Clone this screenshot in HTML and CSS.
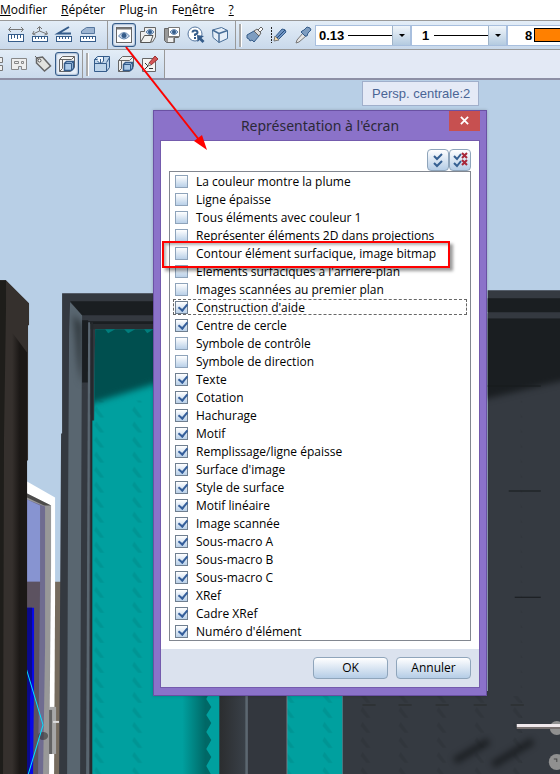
FILE: index.html
```html
<!DOCTYPE html>
<html lang="fr">
<head>
    <meta charset="UTF-8">
    <meta name="viewport" content="width=device-width, initial-scale=1.0">
    <title>Représentation à l'écran</title>
    <link rel="stylesheet" href="styles.css">
</head>
<body>
    <nav class="menubar">
        <a href="#"><u>M</u>odifier</a>
        <a href="#"><u>R</u>épéter</a>
        <a href="#">Plug-in</a>
        <a href="#">Fe<u>n</u>être</a>
        <a href="#"><u>?</u></a>
    </nav>

    <!-- First toolbar -->
    <div class="toolbar">
        <div class="tools tools-measure">
            <button class="tool" aria-label="Mesurer longueur"><svg viewBox="0 0 20 20"><path d="M3 4.500h14M5 2L2.500 4.500 5 7M15 2l2.500 2.500L15 7" stroke="#777" fill="none"/><rect x="2.500" y="9.500" width="15" height="7" fill="#fff" stroke="#355c8a"/><path d="M5.500 10v4M8.500 10v3M11.500 10v4M14.500 10v3" stroke="#355c8a"/></svg></button>
            <button class="tool" aria-label="Mesurer angle"><svg viewBox="0 0 20 20"><path d="M3 9l6.500-3 7.500 3M4 6L2.500 9l3 1M16 6l1.500 3-3 1M7 4l2.500-2.500L12 4M9.500 2v4" stroke="#777" fill="none"/><rect x="2.500" y="11.500" width="15" height="5" fill="#fff" stroke="#355c8a"/><path d="M5.500 12v2M8.500 12v2M11.500 12v2M14.500 12v2" stroke="#355c8a"/></svg></button>
            <button class="tool" aria-label="Mesurer pente"><svg viewBox="0 0 20 20"><path d="M15 2L4 8.500h13" stroke="#355c8a" stroke-width="2" fill="none"/><rect x="2.500" y="11.500" width="15" height="5" fill="#fff" stroke="#355c8a"/><path d="M5.500 12v2M8.500 12v2M11.500 12v2M14.500 12v2" stroke="#355c8a"/></svg></button>
            <button class="tool" aria-label="Mesurer surface"><svg viewBox="0 0 20 20"><path d="M3.500 8.500V6l5-3.500h8v6z" fill="#9db5d2" stroke="#56779f"/><rect x="2.500" y="11.500" width="15" height="5" fill="#fff" stroke="#355c8a"/><path d="M5.500 12v2M8.500 12v2M11.500 12v2M14.500 12v2" stroke="#355c8a"/></svg></button>
        </div>
        <div class="tools tools-view">
            <button class="tool active" aria-label="Représentation à l'écran" aria-pressed="true"><svg viewBox="0 0 20 20"><rect x="2.500" y="2.500" width="15" height="15" fill="#fff" stroke="#666"/><path d="M3 3.500h14" stroke="#777" stroke-width="2"/><path d="M4.500 11q5.500-7 11 0q-5.500 6-11 0z" fill="#c9d9ec" stroke="#6486af"/><circle cx="10" cy="10.500" r="2.500" fill="#355c8a"/></svg></button>
            <button class="tool" aria-label="Ouvrir vue"><svg viewBox="0 0 20 20"><path d="M2.500 17V6.500h4V2.500h11V12l-3 5z" fill="#eee" stroke="#666"/><path d="M2.500 17.500l4-7h8.500l-2.500 7z" fill="#f2f2f0" stroke="#555"/><path d="M8 7q4-5 8 0q-4 5-8 0z" fill="#b9cfe8" stroke="#6486af"/><circle cx="12" cy="7" r="2" fill="#355c8a"/></svg></button>
            <button class="tool" aria-label="Enregistrer vue"><svg viewBox="0 0 20 20"><path d="M2.500 3.500h14v9h-4v5h-8l-2-2z" fill="#999" stroke="#666"/><path d="M6.500 2.500h11v9h-11z" fill="#fff" stroke="#777"/><rect x="6" y="13" width="5" height="4" fill="#eee"/><path d="M8 7q4-5 8 0q-4 5-8 0z" fill="#b9cfe8" stroke="#6486af"/><circle cx="12" cy="7" r="2" fill="#355c8a"/></svg></button>
            <button class="tool" aria-label="Info"><svg viewBox="0 0 20 20"><circle cx="9" cy="9" r="7" fill="#fff" stroke="#56779f"/><path d="M6.500 7.500q0-2 2.500-2t2.500 2q0 1.500-2.500 2v1.500M9 12v2" stroke="#355c8a" stroke-width="2" fill="none"/><path d="M11 10l7 1-2.500 2 3 3-2 2-3-3-2 2z" fill="#355c8a"/></svg></button>
            <button class="tool" aria-label="Vue 3D"><svg viewBox="0 0 20 20"><path d="M2.500 5l9-2.500 6 3v8L9 17.500l-6-5z" fill="#e5eef8" stroke="#486e98"/><path d="M2.500 5L9 8.500v9M9 8.500l8.500-3" fill="none" stroke="#486e98" stroke-width="1.500"/></svg></button>
        </div>
        <div class="tools tools-pen">
            <button class="tool" aria-label="Pinceau"><svg viewBox="0 0 20 20"><path d="M2 10l7-4 5 5-5 6-2-2-2 1-1-2-2-1z" fill="#7e9dc0" stroke="#355c8a"/><path d="M9 6l3-2 4 4-2 3z" fill="#ddd" stroke="#666"/><path d="M13 5l3-3 2 2-3 3z" fill="#fff" stroke="#666"/></svg></button>
            <button class="tool" aria-label="Crayon"><svg viewBox="0 0 20 20"><path d="M2.500 2v16" stroke="#222" stroke-dasharray="2 1"/><path d="M6 12l7-8q4 0 4 3l-8 8z" fill="#7196c5" stroke="#355c8a"/><path d="M8 13l8-8" stroke="#264d7a"/><path d="M6 11l4 4-5 1z" fill="#f5deb0" stroke="#777"/></svg></button>
            <button class="tool" aria-label="Pipette"><svg viewBox="0 0 20 20"><path d="M10 8l3 3-7 6-3 1 1-3z" fill="#e5e5e5" stroke="#777"/><path d="M9 6l2-1 3-3 3 1 1 2-3 3-1 3-2 0-4-4z" fill="#7e9dc0" stroke="#355c8a"/></svg></button>
        </div>
        <div class="combo"><select aria-label="Épaisseur"><option>0.13</option></select><span class="line"></span></div>
        <div class="combo"><select class="indent" aria-label="Trait"><option>1</option></select><span class="line"></span></div>
        <div class="combo"><select class="color" aria-label="Couleur"><option>8</option></select><span class="swatch"></span></div>
    </div>

    <!-- Second toolbar -->
    <div class="toolbar second">
        <div class="tools tools-windows">
            <button class="tool" aria-label="Fenêtres"><svg viewBox="0 0 20 20"><path d="M5.500 3.500h12v5h-12zM5.500 11.500h12v5h-12z" fill="#eee" stroke="#777"/></svg></button>
            <button class="tool" aria-label="Plan"><svg viewBox="0 0 20 20"><path d="M2.500 4.500h15v11h-5v-3h-3v3h-7zM5.500 7.500h4v2h-4zM12.500 7.500h2v2h-2z" fill="#eee" stroke="#888"/></svg></button>
            <button class="tool" aria-label="Étiquette"><svg viewBox="0 0 20 20"><path d="M3.500 4l6-1 8 9-6 5-8-8z" fill="#e3e3df" stroke="#666" stroke-width="1.500"/><circle cx="6.500" cy="6.500" r="1.500" fill="#fff" stroke="#555"/><path d="M6 6L2 2" stroke="#666"/></svg></button>
            <button class="tool active" aria-label="Volume" aria-pressed="true"><svg viewBox="0 0 20 20"><path d="M2.500 5.500l3-3h12v11l-4 4h-11z" fill="#f5f5f3" stroke="#666"/><path d="M2.500 5.500h12l3-3M5.500 5.500v9l-3 3" fill="none" stroke="#666"/><path d="M7.500 9.500l2-2h7v7l-2 2h-7z" fill="#adcbe9" stroke="#355c8a" stroke-width="1.500"/><path d="M7.500 9.500h7v7M14.500 9.500l2-2" fill="none" stroke="#355c8a"/></svg></button>
        </div>
        <div class="tools tools-volume">
            <button class="tool" aria-label="Découper"><svg viewBox="0 0 20 20"><path d="M2.500 5.500l3-3h12v11l-3 4h-12z" fill="#bdd4ea" stroke="#355c8a"/><path d="M6 3h5v5l-2 2-3-3z" fill="#f3f7fc"/><path d="M2.500 9.500h12v8M14.500 8.500l3-5M8.500 9V5M11.500 3v4l-3 3-3-3M2.500 5.500h3" fill="none" stroke="#355c8a"/></svg></button>
            <button class="tool" aria-label="Cube"><svg viewBox="0 0 20 20"><path d="M2.500 6.500l4-4h11v10l-4 5h-11z" fill="#eee" stroke="#666"/><path d="M2.500 6.500h11l4-4M5.500 6.500v8l-3 3" fill="none" stroke="#666"/><path d="M7.500 10.500l2-2h7v6l-2 2h-7z" fill="#adcbe9" stroke="#355c8a" stroke-width="1.500"/><path d="M7.500 10.500h7v6M14.500 10.500l2-2" fill="none" stroke="#355c8a"/></svg></button>
            <button class="tool" aria-label="Script"><svg viewBox="0 0 20 20"><path d="M2.500 4.500h13v13h-13z" fill="#f5f5f3" stroke="#666"/><path d="M5 9l3 3-3 3M9 14.500h4" fill="none" stroke="#333"/><path d="M9 9l6-7 3 3-7 6z" fill="#d25656" stroke="#9b3030"/><path d="M9 9l2 2-3 1z" fill="#f7e4b0" stroke="#888"/></svg></button>
        </div>
    </div>

    <main class="viewport">
        <svg class="scene" viewBox="0 80 560 694" preserveAspectRatio="xMinYMin slice" aria-hidden="true">
            <defs>
                <linearGradient id="wall"><stop offset="0" stop-color="#35302d"/><stop offset=".5" stop-color="#1b1816"/></linearGradient>
                <linearGradient id="fade"><stop offset="0" stop-color="#00a09f"/><stop offset=".8" stop-color="#006866"/><stop offset="1" stop-color="#006866"/></linearGradient>
                <linearGradient id="post"><stop offset="0" stop-color="#2b2d2f"/><stop offset="1" stop-color="#3a4149"/></linearGradient>
                <filter id="soft" x="-30%" y="-30%" width="160%" height="160%" color-interpolation-filters="sRGB"><feGaussianBlur stdDeviation="3"/></filter>
                <pattern id="teeth" width="38" height="15" patternUnits="userSpaceOnUse"><path d="M20 1l8 11h-4L18 5z" fill="#000" opacity=".07"/></pattern>
                <clipPath id="leaf"><path d="M95 329h65v445H92V420h2z"/></clipPath>
                <clipPath id="panel"><path d="M487 318h73v456h-73z"/></clipPath>
            </defs>
            <rect y="80" width="560" height="694" fill="#b8cfe6"/>

            <!-- window on the left -->
            <path d="M54 581h10v193H52z" fill="#756b5e"/>
            <path d="M27 481l28 16v100l-1 177H27z" fill="#fff"/>
            <path d="M27 493l24 12v60l-2 209H27z" fill="#989898"/>
            <path d="M27 493l24 12h-7l-17-8z" fill="#4c4b4b"/>
            <path d="M27 499l18 7v140l-2 128H27z" fill="#6f6c90"/>
            <path d="M27 499l13 6v76H27z" fill="#8794d1"/>
            <path d="M26 581h14l-2 193H26z" fill="#5c5260"/>
            <path d="M26 607h8v73l-1 94h-8z" fill="#0808e8"/>
            <path d="M26 607h6v70l-2 20v77h-5z" fill="#0a0a8c"/>
            <ellipse cx="43" cy="735" rx="5" ry="4" fill="#333" opacity=".6"/>
            <path d="M49 706h7v47h-7z" fill="#a7a7a7"/><path d="M49 709h3v44h-3z" fill="#626262"/>
            <path d="M53 721h6" stroke="#ddd" stroke-width="2"/>
            <path d="M26 667l17 57-15 50" fill="none" stroke="#00e5ff"/>
            <path d="M0 280h6l23 23v22h-1v135h-1v314H0z" fill="#35302d"/>
            <path d="M12 332l15 20v422H12z" fill="url(#wall)"/>
            <path d="M0 280h6v27l-2 130-1 337H0z" fill="#1e1d1a"/>

            <!-- left door -->
            <path d="M62 293h101v481H59l2-341h1z" fill="#343940"/>
            <path d="M70 302l12 13-1 210-1 249H67l1-275 1-166z" fill="#596670"/>
            <path d="M70 301h93v14H82z" fill="#1a1e21"/>
            <path d="M73 314l9 10v60q-5-20-6-42z" fill="#30383d" filter="url(#soft)"/>
            <path d="M82 320h6v62h-6zM88 321h75v3H90v90h-2z" fill="#1a1e21"/>
            <path d="M90 324h73v5H90z" fill="#292d31"/>
            <path d="M88 322h2l-1 452h-3z" fill="#596670"/>
            <path d="M91 322h2v86l-1 366h-2z" fill="#25292d"/>
            <g clip-path="url(#leaf)">
                <path d="M92 329h71v445H92z" fill="#00a09f"/>
                <path d="M85 310h90v67L85 405z" fill="#004f4f" filter="url(#soft)"/>
                <path d="M92 400h71v374H92z" fill="url(#teeth)"/>
            </g>
            <path d="M95 329h10l3 4 7-4h9l4 4 7-4h9l3 4 6-4" fill="#007e7d"/>

            <!-- strip below the dialog -->
            <path d="M153 690h67v84h-67z" fill="#00a09f"/>
            <path d="M182 690h28l-4 8 5 8-5 8 5 8-5 9 5 8-5 9 5 8-5 9 5 9h-29z" fill="url(#fade)"/>
            <path d="M219 690h27v84h-27z" fill="url(#post)"/>
            <path d="M245 690h2v84h-2z" fill="#5c6770"/>
            <path d="M247 690h40v84h-40z" fill="#33373e"/>
            <path d="M286 690h1v84h-1z" fill="#697078"/>
            <path d="M287 690h55v84h-55z" fill="#00a09f"/>
            <path d="M287 690h55v84h-55z" fill="url(#teeth)"/>

            <!-- right door -->
            <path d="M342 690h145V290h73v484H342z" fill="#353a41"/>
            <path d="M487 298h73v14h-73z" fill="#1a1e21"/>
            <g clip-path="url(#panel)">
                <path d="M470 300h110v76l-110 26z" fill="#1a1e21" filter="url(#soft)"/>
                <path d="M520 400h20v374h-20z" fill="url(#teeth)"/>
            </g>
            <path d="M487 313h73v5h-73z" fill="#343940"/>
            <path d="M342 695h190v79H342z" fill="url(#teeth)"/>
            <path d="M487 385.500h53M508 490.500h32M514 596.500h26" stroke="#171a1d"/>
            <path d="M362 704h13M398 704h13M435 704h13M473 704h13M510 704h13" stroke="#2e3235" stroke-width="2"/>
            <path d="M454 760l34-20M492 764l40-24" stroke="#16191c" stroke-width="7" opacity=".8" filter="url(#soft)"/>
            <circle cx="556" cy="727" r="7" fill="#909090"/>
            <circle cx="556" cy="761" r="8" fill="#909090"/>
            <path d="M553 758h3v3" fill="none" stroke="#444"/>
            <path d="M516 723h44v3h-44z" fill="#f0e9ec"/><path d="M516 726h44v2h-44z" fill="#77706f"/>
        </svg>

        <div class="view-name">Persp. centrale:2</div>

        <form class="dialog" role="dialog" aria-labelledby="dialog-title">
            <div class="dialog-head">
                <h1 id="dialog-title">Représentation à l'écran</h1>
                <button type="button" class="close" aria-label="Fermer"><svg viewBox="0 0 10 10"><path d="M1 1l8 8M9 1L1 9" stroke="#fff" stroke-width="2"/></svg></button>
            </div>
            <div class="dialog-body">
                <div class="select-all">
                    <button type="button" aria-label="Tout activer"><svg viewBox="0 0 20 20"><path d="M6 6l3 3 5-5M6 13l3 3 5-5" fill="none" stroke="#355f91" stroke-width="2"/></svg></button>
                    <button type="button" aria-label="Tout désactiver"><svg viewBox="0 0 20 20"><path d="M4 6l3 3 4-5M4 13l3 3 4-5" fill="none" stroke="#355f91" stroke-width="2"/><path d="M12 3l5 5M17 3l-5 5M12 10l5 5M17 10l-5 5" stroke="#a82638" stroke-width="2"/></svg></button>
                </div>
                <div class="options">
                    <label><input type="checkbox">La couleur montre la plume</label>
                    <label><input type="checkbox">Ligne épaisse</label>
                    <label><input type="checkbox">Tous éléments avec couleur 1</label>
                    <label><input type="checkbox">Représenter éléments 2D dans projections</label>
                    <label><input type="checkbox">Contour élément surfacique, image bitmap</label>
                    <label><input type="checkbox">Eléments surfaciques à l'arrière-plan</label>
                    <label><input type="checkbox">Images scannées au premier plan</label>
                    <label class="current"><input type="checkbox" checked>Construction d'aide</label>
                    <label><input type="checkbox" checked>Centre de cercle</label>
                    <label><input type="checkbox">Symbole de contrôle</label>
                    <label><input type="checkbox">Symbole de direction</label>
                    <label><input type="checkbox" checked>Texte</label>
                    <label><input type="checkbox" checked>Cotation</label>
                    <label><input type="checkbox" checked>Hachurage</label>
                    <label><input type="checkbox" checked>Motif</label>
                    <label><input type="checkbox" checked>Remplissage/ligne épaisse</label>
                    <label><input type="checkbox" checked>Surface d'image</label>
                    <label><input type="checkbox" checked>Style de surface</label>
                    <label><input type="checkbox" checked>Motif linéaire</label>
                    <label><input type="checkbox" checked>Image scannée</label>
                    <label><input type="checkbox" checked>Sous-macro A</label>
                    <label><input type="checkbox" checked>Sous-macro B</label>
                    <label><input type="checkbox" checked>Sous-macro C</label>
                    <label><input type="checkbox" checked>XRef</label>
                    <label><input type="checkbox" checked>Cadre XRef</label>
                    <label><input type="checkbox" checked>Numéro d'élément</label>
                </div>
                <div class="actions">
                    <button type="button">OK</button>
                    <button type="button">Annuler</button>
                </div>
            </div>
            <div class="highlight"></div>
        </form>
    </main>

    <!-- Arrow from the toolbar button to the dialog -->
    <svg class="arrow" viewBox="0 0 90 112" aria-hidden="true">
        <path d="M5 5l74 94" stroke="#999" stroke-width="2" opacity=".4"/>
        <path d="M3 3l74 94" stroke="#f00" stroke-width="2"/>
        <path d="M84 106l-13-9 8-6z" fill="#f00"/>
    </svg>
</body>
</html>
```

FILE: styles.css
```css
* {
    box-sizing: border-box;
}
body {
    margin: 0;
    min-height: 100vh;
    display: flex;
    flex-direction: column;
    position: relative;
    overflow-x: hidden;
    font-family: "Open Sans", "Noto Sans", sans-serif;
    font-size: 12px;
    line-height: 18px;
    color: #000;
}
button, select {
    font: inherit;
    color: inherit;
    margin: 0;
    padding: 0;
    border: none;
}

/* Menu and toolbars */
.menubar {
    display: flex;
    gap: 14px;
    height: 21px;
    padding-top: 1px;
    background: #fff;
    border-bottom: 1px solid #999;
}
.menubar a {
    color: #000;
    text-decoration: none;
}
.toolbar {
    display: flex;
    flex-shrink: 0;
    height: 29px;
    background: linear-gradient(#e3edf7, #c9d9eb);
    border-bottom: 1px solid #999;
    overflow: hidden;
}
.toolbar.second {
    height: 30px;
    background: #e3e9f5;
    border-bottom: 2px solid #8d8fa5;
}
.tools {
    display: flex;
    flex-shrink: 0;
    align-items: center;
    border-right: 1px solid #999;
}
.second .tools {
    background: linear-gradient(#e3edf7, #c9d9eb);
}
.tools-measure {
    padding: 0 7px 0 4px;
}
.tools-view {
    padding: 0 3px 0 4px;
}
.tools-windows {
    margin-left: -17px;
    padding-right: 3px;
}
.tools-volume {
    padding-right: 2px;
}
.tools-pen {
    border-right: none;
}
.tools-pen::before, .tools-volume::before {
    content: "";
    width: 2px;
    height: 23px;
    margin: 0 1px 0 3px;
    background: #aaa;
    border-right: 1px solid #fff;
}
.tool {
    width: 24px;
    height: 24px;
    display: flex;
    align-items: center;
    justify-content: center;
    background: none;
}
.tool svg {
    flex-shrink: 0;
    width: 20px;
    height: 20px;
}
.tool.active {
    border: 1px solid #355c8a;
    border-radius: 3px;
    background: #e8eff8;
    box-shadow: inset 0 0 2px #355c8a;
}
.combo {
    position: relative;
    flex: 0 0 96px;
    height: 21px;
    margin-top: 4px;
    background: #fff;
    border: 1px solid #a8bfde;
}
.combo select {
    width: 100%;
    height: 19px;
    padding-left: 3px;
    appearance: none;
    background: none;
    font-family: "Liberation Sans", Arial, sans-serif;
    font-size: 13px;
    font-weight: bold;
}
.combo select.indent {
    padding-left: 10px;
}
.combo select.color {
    padding-left: 17px;
}
.combo::before {
    content: "";
    position: absolute;
    right: 0;
    width: 17px;
    height: 19px;
    background: linear-gradient(#f0f5fa, #b4cbe0);
    border-left: 1px solid #a0b4c8;
}
.combo::after {
    content: "";
    position: absolute;
    right: 5px;
    top: 8px;
    border: 3px solid transparent;
    border-top-color: #000;
}
.line {
    position: absolute;
    left: 32px;
    right: 18px;
    top: 9px;
    height: 1px;
    background: #000;
}
.indent + .line {
    left: 22px;
}
.swatch {
    position: absolute;
    left: 26px;
    top: 2px;
    width: 44px;
    height: 14px;
    background: #ff8000;
    border: 1px solid #000;
}

/* 3D view */
.viewport {
    position: relative;
    flex: 1;
    overflow: hidden;
}
.scene {
    position: absolute;
    width: 100%;
    height: 100%;
}
.view-name {
    position: absolute;
    left: 362px;
    top: 1px;
    height: 25px;
    padding: 0 8px 0 9px;
    font-family: "Liberation Sans", Arial, sans-serif;
    font-size: 13px;
    line-height: 24px;
    color: #4a6595;
    background: #e5eaf6;
    border: 1px solid #a0afcb;
}

/* Dialog */
.dialog {
    position: relative;
    width: 334px;
    margin: 30px 20px 79px 153px;
    padding: 0 6px 7px;
    background: #8b72c9;
    border: 1px solid #6a51a3;
    box-shadow: 0 0 3px rgba(0, 0, 0, 0.2);
}
.dialog-head {
    display: flex;
    justify-content: center;
    height: 29px;
}
.dialog-head h1 {
    margin: 0;
    font-family: "Noto Sans", "Open Sans", sans-serif;
    font-size: 14px;
    font-weight: normal;
    line-height: 30px;
    color: #2b2938;
}
.close {
    position: absolute;
    top: 0;
    right: 6px;
    width: 31px;
    height: 20px;
    background: #c75050;
}
.close svg {
    width: 9px;
    height: 9px;
}
.dialog-body {
    background: #fff;
    border: 1px solid #745bad;
}
.select-all {
    display: flex;
    justify-content: flex-end;
    padding: 8px 8px 0;
}
.select-all button {
    width: 22px;
    height: 22px;
    border: 1px solid #8fa5bb;
    border-radius: 4px;
    background: linear-gradient(#fff, #b5cde6);
}
.select-all svg {
    display: block;
    width: 20px;
    height: 20px;
}
.options {
    margin: 0 8px 8px;
    border: 1px solid #828790;
}
.options label {
    display: flex;
    align-items: center;
    height: 18px;
    padding: 1px 0 0 5px;
    margin: 0 2px;
}
.options label.current {
    outline: 1px dashed #666;
    outline-offset: -2px;
}
.options input {
    appearance: none;
    width: 13px;
    height: 13px;
    margin: 0 8px 0 -2px;
    border: 1px solid #8ea3ba;
    background: linear-gradient(#fff, #b9d0e8);
}
.options input:checked {
    border-color: #6f7f90;
}
.options input:checked::before {
    content: "";
    display: block;
    width: 4px;
    height: 7px;
    margin: 0 0 0 4px;
    border: solid #355f9b;
    border-width: 0 2px 2px 0;
    transform: rotate(40deg);
}
.actions {
    display: flex;
    justify-content: flex-end;
    gap: 8px;
    padding: 8px;
    background: #dbe2ee;
}
.actions button {
    width: 75px;
    height: 22px;
    border: 1px solid #8fa5bb;
    border-radius: 4px;
    background: linear-gradient(#fff, #b5cde6);
}

/* Marks drawn over the window */
.highlight {
    position: absolute;
    left: 8px;
    top: 130px;
    width: 288px;
    height: 27px;
    border: 2px solid #f00;
    box-shadow: 3px 3px 3px rgba(0, 0, 0, 0.4), inset 2px 2px 3px rgba(0, 0, 0, 0.3);
}
.arrow {
    position: absolute;
    left: 123px;
    top: 44px;
    width: 90px;
    height: 112px;
    pointer-events: none;
}
```
